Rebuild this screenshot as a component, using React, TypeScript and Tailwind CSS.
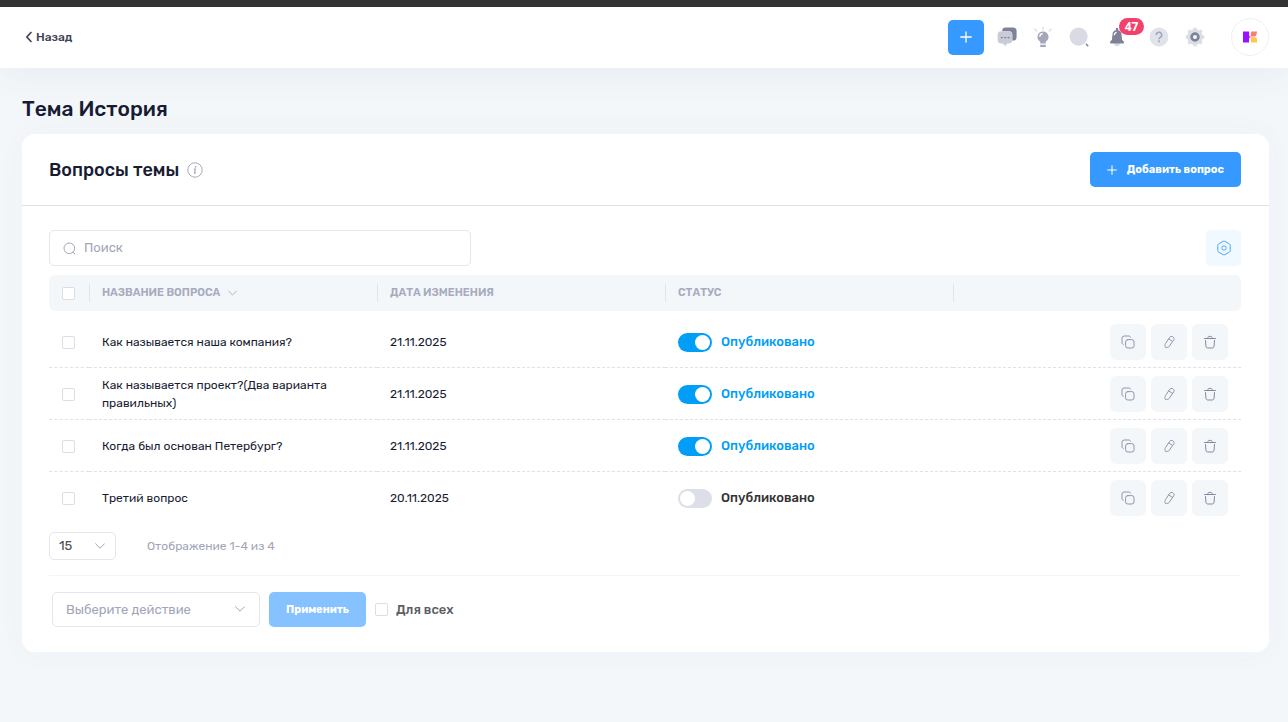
import clsx from "clsx"
import { useState } from "react"

const initialQuestions = [
  { id: 1, title: "Как называется наша компания?", date: "21.11.2025", published: true },
  { id: 2, title: "Как называется проект?(Два варианта правильных)", date: "21.11.2025", published: true },
  { id: 3, title: "Когда был основан Петербург?", date: "21.11.2025", published: true },
  { id: 4, title: "Третий вопрос", date: "20.11.2025", published: false },
]

const checkboxClass =
  "block size-[13px] shrink-0 appearance-none rounded-[2px] border border-[#dcdde6] bg-white checked:border-[#3699ff] checked:bg-[#3699ff]"

function PlusIcon({ className }: { className?: string }) {
  return (
    <svg className={className} viewBox="0 0 12 12" fill="none" stroke="currentColor" strokeWidth={1.3} strokeLinecap="round">
      <path d="M6 0.8v10.4M0.8 6h10.4" />
    </svg>
  )
}

function ChevronIcon({ className }: { className?: string }) {
  return (
    <svg className={className} viewBox="0 0 10 6" fill="none" stroke="currentColor" strokeLinecap="round" strokeLinejoin="round">
      <path d="M0.6 0.8L5 5.2L9.4 0.8" />
    </svg>
  )
}

function MessagesIcon() {
  return (
    <svg className="h-5 w-5" viewBox="0 0 20 20">
      <path d="M8.500 0.500h7.500a3.600 3.600 0 0 1 3.600 3.600v5.800a3.600 3.600 0 0 1-3.600 3.600h-0.800V7.500a3.200 3.200 0 0 0-3.200-3.200H5.200a3.600 3.600 0 0 1 3.300-3.800Z" fill="#7e8299" />
      <path d="M4.200 4.200h7.600a3.600 3.600 0 0 1 3.600 3.600v5a3.600 3.600 0 0 1-3.600 3.600h-1.400L8.200 19l-2.200-2.600H4.200a3.600 3.600 0 0 1-3.600-3.600v-5a3.600 3.600 0 0 1 3.600-3.600Z" fill="#c9ccd6" />
      <path d="M3.800 10h2v1.300h-2zM7.200 10h2v1.300h-2zM10.600 10h2v1.300h-2z" fill="#7e8299" />
    </svg>
  )
}

function IdeaIcon() {
  return (
    <svg className="h-[22px] w-[22px]" viewBox="0 0 22 22">
      <path d="M11 0.800v3.400M2.200 2.800l3 2.700M19.800 2.800l-3 2.700" stroke="#dfe1e8" strokeWidth={1.500} fill="none" />
      <path d="M11 5.400a5.500 5.500 0 0 1 3 10.100l-0.600 1.700H8.600l-0.600-1.700A5.500 5.500 0 0 1 11 5.400Z" fill="#a3a7ba" />
      <path d="M7.800 10.800A3.200 3.200 0 0 1 10.800 7.600" stroke="#fff" strokeWidth={1.4} fill="none" />
      <path d="M8.200 17.200h5.600v1.200H8.200z" fill="#c9ccd6" />
      <path d="M8.200 19h5.600v2H8.200z" fill="#a3a7ba" />
    </svg>
  )
}

function SearchBlobIcon() {
  return (
    <svg className="h-5 w-5" viewBox="0 0 20 20">
      <circle cx="9.600" cy="9.600" r="9.100" fill="#d8dbe3" />
      <path d="M16.900 16.700l2.300 2.500" stroke="#7e8299" strokeWidth={1.500} />
    </svg>
  )
}

function BellIcon() {
  return (
    <svg className="h-5 w-5" viewBox="0 0 20 20">
      <path d="M7.200 16h5.600a2.800 3.300 0 0 1-5.600 0Z" fill="#d8dae2" />
      <path d="M8.800 2a1.200 1.200 0 0 1 2.400 0v1.200a4.300 4.300 0 0 1 3.300 4.200l0.600 5.600 1.700 1.200v2.300H3.200v-2.300L4.900 13l0.600-5.600a4.300 4.300 0 0 1 3.300-4.200Z" fill="#7e8299" />
      <path d="M7.300 8.200A3 3 0 0 1 9.600 5.300" stroke="#fff" strokeWidth={1.300} fill="none" />
    </svg>
  )
}

function HelpIcon() {
  return (
    <svg className="h-5 w-5" viewBox="0 0 20 20">
      <circle cx="10" cy="10" r="9.400" fill="#e1e3ea" />
      <path d="M7.300 8a2.700 2.700 0 1 1 4 2.300c-.9.500-1.300.9-1.300 1.900" stroke="#a0a4b8" strokeWidth={1.500} fill="none" />
      <circle cx="10" cy="14.300" r="1" fill="#a0a4b8" />
    </svg>
  )
}

function GearIcon() {
  return (
    <svg className="h-5 w-5" viewBox="0 0 20 20">
      <g fill="#dcdee5">
        <circle cx="10" cy="10" r="7.800" />
        <path d="M8.300 0.700h3.400v18.600H8.300z" />
        <path d="M8.300 0.700h3.400v18.600H8.300z" transform="rotate(45 10 10)" />
        <path d="M8.300 0.700h3.400v18.600H8.300z" transform="rotate(90 10 10)" />
        <path d="M8.300 0.700h3.400v18.600H8.300z" transform="rotate(135 10 10)" />
      </g>
      <circle cx="10" cy="10" r="3.400" fill="#f5f6f9" stroke="#7e8299" strokeWidth={2.600} />
    </svg>
  )
}

function LogoIcon() {
  return (
    <svg className="h-3 w-[14px]" viewBox="0 0 14 12">
      <path d="M0 0.500h6v3.300a2 2 0 0 0 1.800 2.200a2 2 0 0 0-1.800 2.200v3.300H0z" fill="#9b10ff" />
      <path d="M8.300 0.500h5.700L13.500 3.500a2.500 2.500 0 0 1-2.500 2H7.400C7.600 3.500 8.300 3 8.300 0.500Z" fill="#ff7a70" />
      <path d="M7.400 6.200h4a2.500 2.500 0 0 1 2.600 2.400v2.900H8Z" fill="#ffc845" />
    </svg>
  )
}

function InfoIcon() {
  return (
    <svg className="size-4" viewBox="0 0 16 16" fill="none">
      <circle cx="8" cy="8" r="7.200" stroke="#a6aabf" />
      <circle cx="8.600" cy="4.800" r="0.900" fill="#a6aabf" />
      <path d="M6.900 7.200h1.500l-.9 4h1.300" stroke="#a6aabf" strokeWidth={1.200} />
    </svg>
  )
}

function CopyIcon() {
  return (
    <svg className="size-[14px]" viewBox="0 0 14 14" fill="none" stroke="#9095ab" strokeLinecap="round">
      <rect x="4.600" y="4.600" width="8.400" height="8.400" rx="2.200" />
      <path d="M2.200 9.400C1.400 9.200 1 8.600 1 7.800V3.200A2.200 2.200 0 0 1 3.200 1h4.600c.9 0 1.500.5 1.700 1.200" />
    </svg>
  )
}

function PencilIcon() {
  return (
    <svg className="size-[14px]" viewBox="0 0 14 14" fill="none" stroke="#9095ab" strokeLinejoin="round" strokeLinecap="round">
      <path d="M7.900 2.100a1.800 1.800 0 0 1 2.500-.5l.9.600a1.800 1.800 0 0 1 .5 2.500l-4.700 6.800a2 2 0 0 1-1.200.8l-1.500.3a1 1 0 0 1-1.200-.8l-.2-1.500a2 2 0 0 1 .3-1.400Z" />
      <path d="M6.800 3.900l3.700 2.500" />
    </svg>
  )
}

function TrashIcon() {
  return (
    <svg className="size-[14px]" viewBox="0 0 14 14" fill="none" stroke="#8489a0" strokeLinecap="round">
      <path d="M1.500 3.500h11" />
      <path d="M4.800 3.300c0-1.300.4-1.900 1.300-1.900h1.800c.9 0 1.300.6 1.300 1.900" />
      <path d="M2.500 5.500l.4 5.500c.1 1.300.8 2 2 2h4.200c1.200 0 1.900-.7 2-2l.4-5.500" />
    </svg>
  )
}

function HexagonIcon() {
  return (
    <svg className="size-4" viewBox="0 0 16 16" fill="none" stroke="#4ba6ff" strokeLinejoin="round">
      <path d="M7.200 1.300a1.600 1.600 0 0 1 1.600 0l4.600 2.600c.5.300.8.800.8 1.400v5.400c0 .6-.3 1.100-.8 1.400l-4.600 2.600a1.600 1.600 0 0 1-1.600 0l-4.600-2.600a1.600 1.600 0 0 1-.8-1.400V5.300c0-.6.3-1.100.8-1.400Z" />
      <circle cx="8" cy="8" r="2.200" />
    </svg>
  )
}

function Header() {
  const iconButton = "relative flex size-9 items-center justify-center"

  return (
    <header className="relative flex h-[68px] items-center justify-between border-t-[7px] border-[#333333] bg-white pr-[19px] pb-px pl-[25px] shadow-[0_10px_30px_0_rgba(82,63,105,0.05)]">
      <a href="#" className="flex items-center gap-[3px] text-[12px] font-medium text-[#3f4254]">
        <svg className="h-3 w-2" viewBox="0 0 8 12" fill="none" stroke="currentColor" strokeWidth={1.700} strokeLinecap="round" strokeLinejoin="round">
          <path d="M6 1.500L1.800 6l4.200 4.500" />
        </svg>
        Назад
      </a>

      <div className="flex items-center">
        <button aria-label="Создать" className="mr-[5px] flex h-[35px] w-9 items-center justify-center rounded-[5px] bg-[#3699ff] text-white">
          <PlusIcon className="size-3" />
        </button>
        <button aria-label="Сообщения" className={iconButton}>
          <MessagesIcon />
        </button>
        <button aria-label="Идеи" className={iconButton}>
          <IdeaIcon />
        </button>
        <button aria-label="Поиск по сайту" className={iconButton}>
          <SearchBlobIcon />
        </button>
        <button aria-label="Уведомления" className={clsx(iconButton, "mr-1.5 ml-0.5")}>
          <BellIcon />
          <span className="absolute -top-px left-[20px] flex h-[17px] w-[25px] items-center justify-center rounded-full bg-[#f1416c] font-['Open_Sans'] text-[12px] font-bold text-white">
            47
          </span>
        </button>
        <button aria-label="Помощь" className={iconButton}>
          <HelpIcon />
        </button>
        <button aria-label="Настройки" className={clsx(iconButton, "mr-[18px]")}>
          <GearIcon />
        </button>
        <button aria-label="Профиль" className="flex size-[38px] items-center justify-center rounded-full border border-[#f0f0f3]">
          <LogoIcon />
        </button>
      </div>
    </header>
  )
}

export default function App() {
  const [questions, setQuestions] = useState(initialQuestions)

  const togglePublished = (id: number) => {
    setQuestions((prev) => prev.map((q) => (q.id === id ? { ...q, published: !q.published } : q)))
  }

  const headCell = "h-9 p-0 text-left align-middle text-[11px] font-semibold text-[#a8abbf] uppercase last:rounded-r-md"
  const headLabel = "flex h-[18px] items-center gap-2 border-l border-[#e1e4ea] pl-3"
  const actionButton = "flex size-9 items-center justify-center rounded-md bg-[#f3f7fa]"

  return (
    <div className="min-h-screen bg-[#f3f7fa] font-[Rubik,Roboto,sans-serif] text-[#181c32]">
      <Header />

      <main className="pt-[25px] pr-[19px] pb-10 pl-[22px]">
        <h1 className="text-[21px] leading-8 font-medium">Тема История</h1>

        <section className="mt-[9px] rounded-[13px] bg-white shadow-[0_0_30px_0_rgba(82,63,105,0.03)]">
          <div className="flex h-[72px] items-center justify-between border-b border-[#dfe0e6] pr-7 pl-[27px]">
            <div className="flex items-center gap-2">
              <h2 className="text-[18px] leading-6 font-medium">Вопросы темы</h2>
              <InfoIcon />
            </div>
            <button className="flex h-[35px] items-center gap-[10px] rounded-[5px] bg-[#3699ff] px-[17px] text-[11px] leading-[17px] font-bold text-white">
              <PlusIcon className="size-[10px]" />
              Добавить вопрос
            </button>
          </div>

          <div className="pt-6 pr-7 pb-[25px] pl-[27px]">
            <div className="mb-[9px] flex items-center justify-between">
              <label className="flex h-9 w-[422px] items-center gap-2 rounded-[5px] border border-[#e4e6ef] px-[13px]">
                <svg className="size-[13px] shrink-0" viewBox="0 0 13 13" fill="none" stroke="#a1a5b7">
                  <circle cx="6.300" cy="6.300" r="5.300" />
                  <path d="M10.200 10.400l1.900 1.700" strokeLinecap="round" />
                </svg>
                <input
                  type="search"
                  aria-label="Поиск"
                  placeholder="Поиск"
                  className="min-w-0 flex-1 text-[13px] outline-none placeholder:text-[#a1a5b7]"
                />
              </label>
              <button aria-label="Настройки таблицы" className="flex h-9 w-[35px] items-center justify-center rounded-[5px] bg-[#f0f9ff]">
                <HexagonIcon />
              </button>
            </div>

            <table className="w-full table-fixed border-separate border-spacing-0">
              <thead>
                <tr className="bg-[#f3f7fa]">
                  <th className="h-9 w-10 rounded-l-md p-0 pl-[13px]">
                    <input type="checkbox" aria-label="Выбрать все вопросы" className={checkboxClass} />
                  </th>
                  <th className={headCell}>
                    <div className={headLabel}>
                      Название вопроса
                      <ChevronIcon className="h-[6px] w-[9px]" />
                    </div>
                  </th>
                  <th className={headCell}>
                    <div className={headLabel}>Дата изменения</div>
                  </th>
                  <th className={headCell}>
                    <div className={headLabel}>Статус</div>
                  </th>
                  <th className={headCell}>
                    <div className={headLabel} />
                  </th>
                </tr>
              </thead>
              <tbody className="text-[12px] leading-[18px] [&_td]:border-b [&_td]:border-dashed [&_td]:border-[#dfe0e8] [&_td]:pb-[7px] [&_tr:first-child_td]:pt-[13px] [&_tr:last-child_td]:border-b-0">
                {questions.map((q) => (
                  <tr key={q.id}>
                    <td className="pt-2 pl-[13px]">
                      <input type="checkbox" aria-label={q.title} className={checkboxClass} />
                    </td>
                    <td className="pt-2 pr-9 pl-[13px]">{q.title}</td>
                    <td className="pt-2 pl-[13px]">{q.date}</td>
                    <td className="pt-2 pl-[13px]">
                      <label className={clsx("flex items-center gap-[9px] text-[13px] font-medium", q.published ? "text-[#009ef7]" : "text-[#333333]")}>
                        <input
                          type="checkbox"
                          role="switch"
                          checked={q.published}
                          onChange={() => togglePublished(q.id)}
                          className="flex h-[19px] w-[34px] appearance-none items-center rounded-full bg-[#dcdfe8] px-[2px] before:size-[15px] before:rounded-full before:bg-white checked:justify-end checked:bg-[#009ef7]"
                        />
                        Опубликовано
                      </label>
                    </td>
                    <td className="pt-2 pr-[13px]">
                      <div className="flex justify-end gap-[5px]">
                        <button aria-label="Копировать" className={actionButton}>
                          <CopyIcon />
                        </button>
                        <button aria-label="Редактировать" className={actionButton}>
                          <PencilIcon />
                        </button>
                        <button aria-label="Удалить" className={actionButton}>
                          <TrashIcon />
                        </button>
                      </div>
                    </td>
                  </tr>
                ))}
              </tbody>
            </table>

            <div className="mt-[9px] flex items-center gap-[31px] border-b border-[#f3f4f8] pb-[15px]">
              <div className="relative">
                <select aria-label="Строк на странице" className="block h-7 w-[67px] appearance-none rounded-[5px] border border-[#e4e6ef] pl-[9px] text-[13px] text-[#4b4b4f]">
                  <option>15</option>
                  <option>30</option>
                  <option>50</option>
                </select>
                <ChevronIcon className="pointer-events-none absolute top-[11px] right-[11px] h-[6px] w-[10px] text-[#a1a5b7]" />
              </div>
              <span className="text-[12px] text-[#a1a5b7]">Отображение 1-4 из 4</span>
            </div>

            <div className="mt-4 flex items-center gap-[9px] pl-[3px]">
              <div className="relative">
                <select aria-label="Действие" className="block h-[35px] w-[208px] appearance-none rounded-[5px] border border-[#e4e6ef] pl-[13px] text-[13px] text-[#a1a5b7]">
                  <option>Выберите действие</option>
                </select>
                <ChevronIcon className="pointer-events-none absolute top-[14px] right-[15px] h-[6px] w-[10px] text-[#a1a5b7]" />
              </div>
              <button className="h-[35px] rounded-[5px] bg-[#86c2ff] px-[17px] text-[11px] leading-[17px] font-bold text-white">Применить</button>
              <label className="flex items-center gap-2 text-[13px] font-medium text-[#5e5e62]">
                <input type="checkbox" className={checkboxClass} />
                Для всех
              </label>
            </div>
          </div>
        </section>
      </main>
    </div>
  )
}
